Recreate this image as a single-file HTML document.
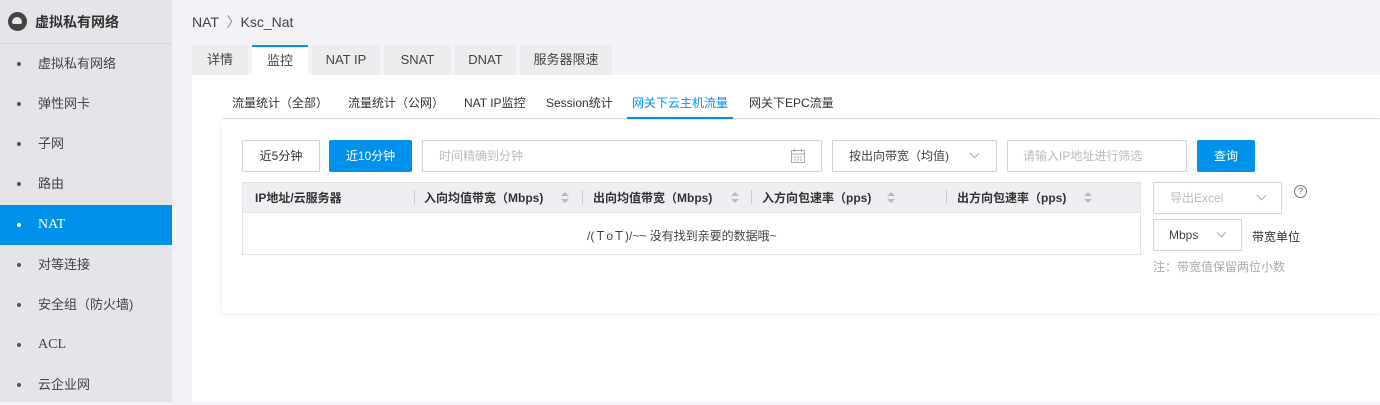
<!DOCTYPE html><html><head><meta charset="utf-8"><style>
*{margin:0;padding:0;box-sizing:border-box}
body{width:1380px;height:402px;overflow:hidden;background:#f3f3f7;font-family:"Liberation Sans","Noto Sans CJK SC",sans-serif;font-size:12px;color:#333;position:relative}
.side{position:absolute;left:0;top:0;width:172px;height:402px;background:#e5e4e9}
.sh{height:44px;border-bottom:1px solid #d4d4d8;display:flex;align-items:center;padding-left:8px;font-size:14px;font-weight:bold;color:#333}
.logo{width:19px;height:19px;border-radius:50%;background:#444;margin-right:8px;position:relative}
.logo:after{content:"";position:absolute;left:4px;top:5px;width:10px;height:7px;border-radius:5px 5px 2px 2px;background:#e5e4e9}
.it{position:absolute;left:0;width:172px;height:40px;line-height:40px;padding-left:38px;font-size:13px;color:#444}
.it:before{content:"";position:absolute;left:17px;top:18px;width:4px;height:4px;border-radius:50%;background:#555}
.it.a{background:#0091ea;color:#fff}.it.a:before{background:#fff}
.serif{font-family:"Liberation Serif",serif;font-size:14px}
.abs{position:absolute}
.tab{position:absolute;top:45px;height:30px;line-height:30px;text-align:center;background:#ececee;font-size:13px;color:#444}
.tab.a{background:#fff;border-top:2px solid #0091ea;line-height:27px}
.panel{position:absolute;left:192px;top:75px;width:1188px;height:327px;background:#fff}
.st{position:absolute;top:94px;font-size:12px;color:#333}
.card{position:absolute;left:222px;top:120px;width:1158px;height:193px;background:#fff;box-shadow:0 1px 6px rgba(0,0,0,.08)}
.box{position:absolute;border:1px solid #d4d4d8;background:#fff;height:32px;line-height:30px;font-size:12px;border-radius:1px}
.btn{position:absolute;background:#0091ea;color:#fff;height:32px;line-height:32px;text-align:center;font-size:12px;border-radius:2px}
.chev{position:absolute;width:7px;height:7px;border-right:1px solid #aaa;border-bottom:1px solid #aaa;transform:rotate(45deg)}
.th{position:absolute;top:183px;font-size:12px;font-weight:bold;color:#333;line-height:30px}
.sep{position:absolute;top:190px;width:1px;height:14px;background:#ccc}
.sort{position:absolute;top:192px;width:8px;height:12px}
.sort:before{content:"";position:absolute;left:0;top:0;border:4px solid transparent;border-bottom:4px solid #bbb;border-top:0}
.sort:after{content:"";position:absolute;left:0;top:7px;border:4px solid transparent;border-top:4px solid #bbb;border-bottom:0}
</style></head><body>
<div class="side"><div class="sh"><div class="logo"></div>虚拟私有网络</div></div>
<div class="it" style="top:44px">虚拟私有网络</div>
<div class="it" style="top:84px">弹性网卡</div>
<div class="it" style="top:124px">子网</div>
<div class="it" style="top:164px">路由</div>
<div class="it a serif" style="top:205px">NAT</div>
<div class="it" style="top:245px">对等连接</div>
<div class="it" style="top:285px">安全组（防火墙)</div>
<div class="it serif" style="top:325px">ACL</div>
<div class="it" style="top:365px">云企业网</div>
<div class="abs" style="left:192px;top:12px;font-size:14px;color:#444">NAT &nbsp;<span style="color:#888">〉</span>Ksc_Nat</div>
<div class="panel"></div>
<div class="tab" style="left:192px;width:56px">详情</div>
<div class="tab a" style="left:252px;width:56px">监控</div>
<div class="tab" style="left:312px;width:68px">NAT IP</div>
<div class="tab" style="left:384px;width:67px">SNAT</div>
<div class="tab" style="left:455px;width:61px">DNAT</div>
<div class="tab" style="left:520px;width:92px">服务器限速</div>
<div class="abs" style="left:222px;top:118px;width:1158px;height:1px;background:#e0e0e4"></div>
<div class="st" style="left:232px">流量统计（全部）</div>
<div class="st" style="left:348px">流量统计（公网）</div>
<div class="st" style="left:464px">NAT IP监控</div>
<div class="st" style="left:546px">Session统计</div>
<div class="st" style="left:632px;color:#0091ea">网关下云主机流量</div>
<div class="abs" style="left:627px;top:117px;width:106px;height:2px;background:#0091ea"></div>
<div class="st" style="left:749px">网关下EPC流量</div>
<div class="card"></div>
<div class="box" style="left:242px;top:140px;width:78px;text-align:center">近5分钟</div>
<div class="btn" style="left:329px;top:140px;width:83px">近10分钟</div>
<div class="box" style="left:422px;top:140px;width:400px;padding-left:16px;color:#bbb">时间精确到分钟
<svg style="position:absolute;right:15px;top:7px" width="16" height="16" viewBox="0 0 16 16" fill="none" stroke="#aaa"><rect x="1.5" y="2.5" width="13" height="12"/><path d="M1.5 6h13M4.5 1v3M11.5 1v3M4 9h2M7 9h2M10 9h2M4 12h2M7 12h2M10 12h2"/></svg></div>
<div class="box" style="left:832px;top:140px;width:165px;padding-left:16px;color:#444">按出向带宽（均值)<div class="chev" style="left:138px;top:9px"></div></div>
<div class="box" style="left:1007px;top:140px;width:180px;padding-left:15px;color:#bbb">请输入IP地址进行筛选</div>
<div class="btn" style="left:1197px;top:140px;width:58px">查询</div>
<div class="abs" style="left:242px;top:182px;width:899px;height:73px;border:1px solid #e3e3e6"></div>
<div class="abs" style="left:243px;top:183px;width:897px;height:30px;background:#efeff3;border-bottom:1px solid #e3e3e6"></div>
<div class="th" style="left:255px">IP地址/云服务器</div>
<div class="sep" style="left:414px"></div>
<div class="th" style="left:424px">入向均值带宽（Mbps)</div><div class="sort" style="left:561px"></div>
<div class="sep" style="left:582px"></div>
<div class="th" style="left:593px">出向均值带宽（Mbps)</div><div class="sort" style="left:731px"></div>
<div class="sep" style="left:751px"></div>
<div class="th" style="left:762px">入方向包速率（pps)</div><div class="sort" style="left:887px"></div>
<div class="sep" style="left:946px"></div>
<div class="th" style="left:957px">出方向包速率（pps)</div><div class="sort" style="left:1084px"></div>
<div class="abs" style="left:587px;top:227px;color:#444">/(ＴoＴ)/~~ 没有找到亲要的数据哦~</div>
<div class="box" style="left:1153px;top:182px;width:129px;height:32px;padding-left:16px;color:#bbb">导出Excel<div class="chev" style="left:104px;top:9px"></div></div>
<div class="abs" style="left:1294px;top:185px;width:13px;height:13px;border:1px solid #777;border-radius:50%;font-size:9px;line-height:11px;text-align:center;color:#777">?</div>
<div class="box" style="left:1153px;top:219px;width:89px;height:32px;padding-left:15px;color:#444">Mbps<div class="chev" style="left:64px;top:9px"></div></div>
<div class="abs" style="left:1252px;top:228px;color:#333">带宽单位</div>
<div class="abs" style="left:1153px;top:258px;color:#aaa">注：带宽值保留两位小数</div>
</body></html>
